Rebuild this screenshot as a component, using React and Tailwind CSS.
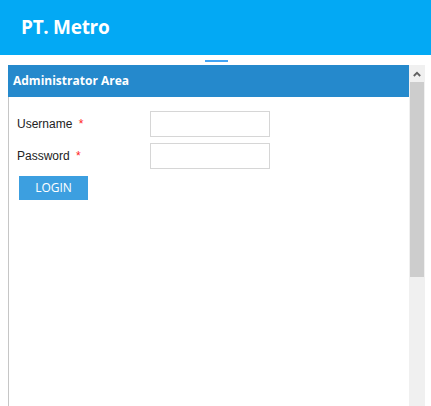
export default function App() {
  return (
    <div className="w-[431px] h-[406px] overflow-hidden bg-white font-['Liberation_Sans',Arial,sans-serif]">
      <header className="h-[55px] bg-[#03a9f4] flex items-center px-[21px]">
        <h1 className="text-white font-bold text-[19px] font-['Open_Sans',sans-serif] tracking-[-0.3px]">PT. Metro</h1>
      </header>
      <div className="h-[10px] flex justify-center items-center pt-px">
        <div className="w-[23px] h-[2px] bg-[#42a5f5] ml-[2px]" />
      </div>
      <div className="flex pl-2 h-[341px]">
        <div className="w-[401px] border-l border-[#c6c6c6] flex flex-col">
          <div className="h-[32px] bg-[#2589cc] flex items-center px-[5px] -ml-px">
            <span className="text-white font-bold text-[12px] font-['Open_Sans',sans-serif]">Administrator Area</span>
          </div>
          <div className="pl-[8px] pt-[14px]">
            <div className="flex items-center h-[25px]">
              <label className="w-[133px] text-[12px] text-[#222]">
                Username <span className="text-[#ff2222] ml-[3px]">*</span>
              </label>
              <input className="w-[120px] h-[26px] border border-[#d6d6d6] outline-none" />
            </div>
            <div className="flex items-center h-[25px] mt-[7px]">
              <label className="w-[133px] text-[12px] text-[#222]">
                Password <span className="text-[#ff2222] ml-[3px]">*</span>
              </label>
              <input type="password" className="w-[120px] h-[26px] border border-[#d6d6d6] outline-none" />
            </div>
            <button className="mt-[8px] ml-[2px] w-[69px] h-[24px] bg-[#3c9fe0] text-white text-[12px] font-['Open_Sans',sans-serif]">
              LOGIN
            </button>
          </div>
        </div>
        <div className="w-4 bg-[#f0f0f0] flex flex-col">
          <div className="h-[17px] flex items-center justify-center">
            <svg width="8" height="6" viewBox="0 0 8 6">
              <path d="M0.8 5L4 1.8L7.2 5" stroke="#606060" strokeWidth="1.8" fill="none" />
            </svg>
          </div>
          <div className="mx-px h-[195px] bg-[#cdcdcd]" />
        </div>
      </div>
    </div>
  );
}
